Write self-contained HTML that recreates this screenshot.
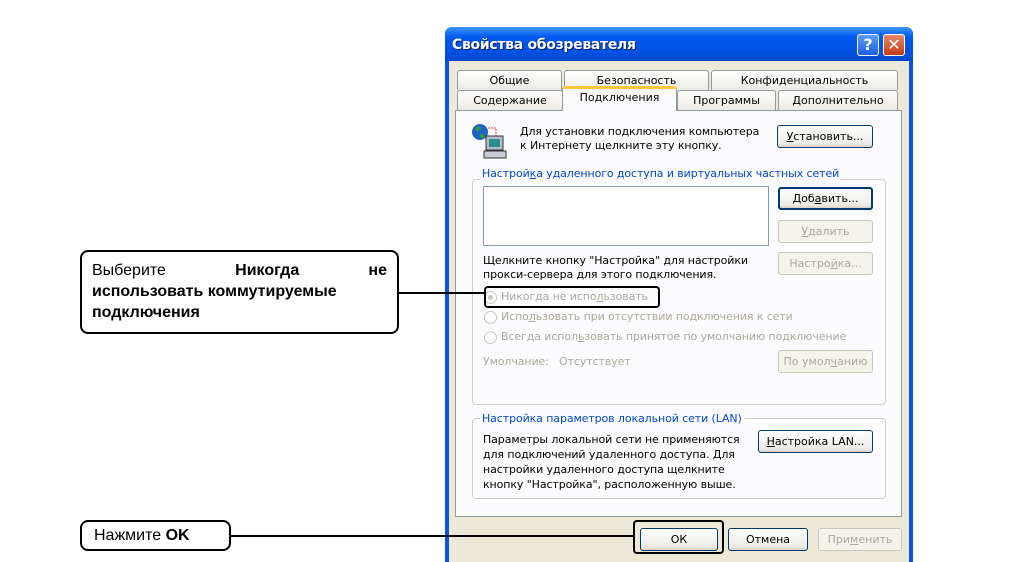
<!DOCTYPE html>
<html><head><meta charset="utf-8"><style>
html,body{margin:0;}
#w{width:1025px;height:562px;background:#fff;position:relative;overflow:hidden;font-family:Tahoma,"DejaVu Sans","Liberation Sans",sans-serif;}
.a{position:absolute;}
.t{font-size:11px;color:#000;white-space:nowrap;line-height:14px;letter-spacing:-0.1px;}
.btn{position:absolute;box-sizing:border-box;border:1px solid #003C74;border-radius:3px;background:linear-gradient(#fff,#ECEBE6 85%,#D6D0C5);font-size:11px;text-align:center;line-height:21px;color:#000;}
.dis{border-color:#C9C7BA;color:#ACA899;background:#F5F4EA;}
.tab{position:absolute;box-sizing:border-box;border:1px solid #919B9C;border-bottom:none;border-radius:3px 3px 0 0;background:linear-gradient(#fff,#ECEBE5);font-size:11px;text-align:center;line-height:19px;}
.grp{position:absolute;box-sizing:border-box;border:1px solid #D0D0BF;border-radius:4px;}
.leg{position:absolute;background:#FCFCFE;color:#0046D5;font-size:11px;padding:0 2px;line-height:13px;white-space:nowrap;letter-spacing:-0.1px;}
.rad{position:absolute;width:11px;height:11px;border:1px solid #C9C7BA;border-radius:50%;background:#fff;}
.g{color:#ACA899;}
.call{position:absolute;box-sizing:border-box;border:2px solid #000;border-radius:8px;font-family:"Liberation Sans",Arial,sans-serif;font-size:16px;}
</style></head><body><div id="w">
<!-- window -->
<div class="a" style="left:445px;top:27px;width:468px;height:535px;background:#0A53E3;border-radius:7px 7px 0 0;"></div>
<div class="a" style="left:445px;top:27px;width:468px;height:34px;background:linear-gradient(#3D95FF,#0058EE 30%,#0050E0 80%,#0846C8);border-radius:7px 7px 0 0;"></div>
<div class="a" style="left:452px;top:37px;color:#fff;font-weight:bold;font-size:14px;font-family:'Trebuchet MS','DejaVu Sans',sans-serif;text-shadow:1px 1px #0A1E72;letter-spacing:-0.3px;">Свойства обозревателя</div>
<div class="a" style="left:857px;top:34px;width:22px;height:22px;box-sizing:border-box;border:1px solid #fff;border-radius:3px;background:linear-gradient(#5A9BFF,#1F5FE0);color:#fff;font-weight:bold;font-size:16px;text-align:center;line-height:20px;">?</div>
<div class="a" style="left:883px;top:34px;width:22px;height:22px;box-sizing:border-box;border:1px solid #fff;border-radius:3px;background:linear-gradient(#E88A6C,#C43A14);color:#fff;font-weight:bold;font-size:16px;text-align:center;line-height:20px;">✕</div>
<div class="a" style="left:449px;top:61px;width:460px;height:501px;background:#ECE9D8;"></div>
<!-- tabs -->
<div class="tab" style="left:457px;top:70px;width:105px;height:20px;">Общие</div>
<div class="tab" style="left:564px;top:70px;width:145px;height:20px;">Безопасность</div>
<div class="tab" style="left:711px;top:70px;width:187px;height:20px;">Конфиденциальность</div>
<div class="tab" style="left:457px;top:90px;width:106px;height:21px;">Содержание</div>
<div class="tab" style="left:677px;top:90px;width:99px;height:21px;">Программы</div>
<div class="tab" style="left:778px;top:90px;width:120px;height:21px;">Дополнительно</div>
<!-- panel -->
<div class="a" style="left:455px;top:110px;width:447px;height:407px;box-sizing:border-box;border:1px solid #919B9C;background:#FCFCFE;"></div>
<div class="tab" style="left:562px;top:86px;width:115px;height:25px;background:#FCFCFE;border-top:3px solid #FFC83C;line-height:18px;">Подключения</div>
<!-- icon -->
<svg class="a" style="left:470px;top:122px" width="40" height="38">
<circle cx="10" cy="10" r="8" fill="#1E62C8"/><path d="M5 6 q4-3 6 0 q-2 4-5 3z M10 12 q4 0 5 3 q-3 3-5 0z" fill="#2E9E2E"/>
<path d="M18 6 h8 v10" stroke="#E33" stroke-dasharray="2 1" fill="none"/>
<rect x="16" y="14" width="17" height="14" fill="#B8BCC8" stroke="#333"/><rect x="19" y="17" width="11" height="8" fill="#2A8C8C"/>
<rect x="14" y="29" width="22" height="7" fill="#C8CCD4" stroke="#333"/>
</svg>
<div class="a t" style="left:520px;top:125px;">Для установки подключения компьютера<br>к Интернету щелкните эту кнопку.</div>
<div class="btn" style="left:777px;top:125px;width:96px;height:23px;"><u>У</u>становить...</div>
<!-- group 1 -->
<div class="grp" style="left:472px;top:179px;width:414px;height:226px;"></div>
<div class="leg" style="left:480px;top:167px;">Настрой<u>к</u>а удаленного доступа и виртуальных частных сетей</div>
<div class="a" style="left:483px;top:186px;width:286px;height:60px;box-sizing:border-box;border:1px solid #7F9DB9;background:#fff;"></div>
<div class="btn" style="left:778px;top:187px;width:95px;height:23px;border-width:2px;line-height:19px;">Доб<u>а</u>вить...</div>
<div class="btn dis" style="left:778px;top:220px;width:95px;height:23px;"><u>У</u>далить</div>
<div class="btn dis" style="left:778px;top:252px;width:95px;height:23px;">Настро<u>й</u>ка...</div>
<div class="a t" style="left:483px;top:254px;">Щелкните кнопку "Настройка" для настройки<br>прокси-сервера для этого подключения.</div>
<div class="rad" style="left:484px;top:291px;"><div class="a" style="left:3px;top:3px;width:5px;height:5px;border-radius:50%;background:#C9C7BA"></div></div>
<div class="a t g" style="left:501px;top:290px;">Никогда не испо<u>л</u>ьзовать</div>
<div class="rad" style="left:484px;top:311px;"></div>
<div class="a t g" style="left:501px;top:310px;">Испо<u>л</u>ьзовать при отсутствии подключения к сети</div>
<div class="rad" style="left:484px;top:331px;"></div>
<div class="a t g" style="left:501px;top:330px;">Всегда испол<u>ь</u>зовать принятое по умолчанию подключение</div>
<div class="a t g" style="left:483px;top:355px;">Умолчание:&nbsp;&nbsp; Отсутствует</div>
<div class="btn dis" style="left:778px;top:350px;width:95px;height:23px;">По умол<u>ч</u>анию</div>
<!-- group 2 -->
<div class="grp" style="left:472px;top:418px;width:414px;height:81px;"></div>
<div class="leg" style="left:480px;top:412px;">Настройка параметров локальной сети (LAN)</div>
<div class="a t" style="left:483px;top:432px;line-height:15px;">Параметры локальной сети не применяются<br>для подключений удаленного доступа. Для<br>настройки удаленного доступа щелкните<br>кнопку "Настройка", расположенную выше.</div>
<div class="btn" style="left:758px;top:430px;width:115px;height:23px;"><u>Н</u>астройка LAN...</div>
<!-- bottom -->
<div class="btn" style="left:640px;top:528px;width:78px;height:23px;">ОК</div>
<div class="btn" style="left:728px;top:528px;width:80px;height:23px;">Отмена</div>
<div class="btn dis" style="left:818px;top:528px;width:84px;height:23px;">При<u>м</u>енить</div>
<!-- highlights -->
<div class="a" style="left:484px;top:286px;width:176px;height:22px;box-sizing:border-box;border:2px solid #000;border-radius:4px;"></div>
<div class="a" style="left:633px;top:520px;width:91px;height:34px;box-sizing:border-box;border:2px solid #000;border-radius:4px;"></div>
<!-- callouts -->
<div class="call" style="left:80px;top:250px;width:319px;height:84px;padding:8px 10px;line-height:21px;">
<div style="display:flex;justify-content:space-between"><span>Выберите</span><b>Никогда</b><b>не</b></div>
<b>использовать коммутируемые<br>подключения</b></div>
<div class="a" style="left:398px;top:292px;width:86px;height:2px;background:#000;"></div>
<div class="call" style="left:80px;top:520px;width:151px;height:31px;padding:0 12px;line-height:27px;">Нажмите <b>OK</b></div>
<div class="a" style="left:230px;top:535px;width:403px;height:2px;background:#000;"></div>
</div></body></html>
